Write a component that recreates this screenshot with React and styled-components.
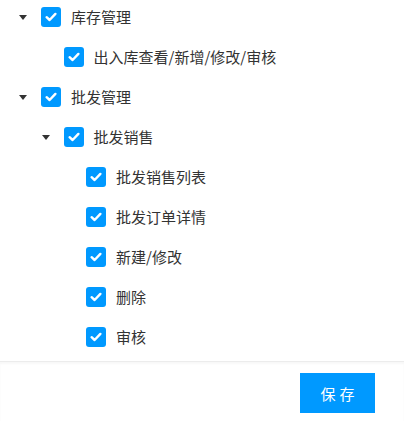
import React, { useState } from "react";
import styled, { createGlobalStyle } from "styled-components";

const Global = createGlobalStyle`
  html, body { margin: 0; padding: 0; background: #fff; }
  body { font-family: "Noto Sans CJK SC", "Noto Sans", sans-serif; }
`;

const Page = styled.div`
  width: 404px;
  height: 421px;
  display: flex;
  flex-direction: column;
  background: #fff;
`;

const Tree = styled.div`
  flex: 1;
  display: flex;
  flex-direction: column;
  gap: 8px;
  padding-top: 1px;
`;

const Row = styled.div`
  height: 32px;
  display: flex;
  align-items: center;
  padding-left: ${(p) => 19 + p.$level * 22.5}px;
`;

const CaretBox = styled.div`
  width: 22px;
  height: 32px;
  display: flex;
  align-items: center;
  cursor: pointer;
`;

const Caret = styled.span`
  width: 0;
  height: 0;
  border-left: 4px solid transparent;
  border-right: 4px solid transparent;
  border-top: 5px solid #333;
  visibility: ${(p) => (p.$hidden ? "hidden" : "visible")};
`;

const Box = styled.span`
  width: 20px;
  height: 20px;
  border-radius: 3px;
  background: #0099ff;
  display: flex;
  align-items: center;
  justify-content: center;
  flex-shrink: 0;
`;

const Label = styled.span`
  margin-left: 10px;
  font-size: 15px;
  color: #333;
  white-space: nowrap;
  line-height: 20px;
`;

const Footer = styled.div`
  height: 60px;
  border-top: 1px solid #ececec;
  box-shadow: inset 0 2px 2px rgba(0, 0, 0, 0.03);
  display: flex;
  justify-content: flex-end;
  align-items: flex-start;
  padding: 11px 29px 0 0;
  box-sizing: border-box;
`;

const SaveButton = styled.button`
  width: 75px;
  height: 40px;
  border: none;
  border-radius: 0;
  background: #0099ff;
  color: #fff;
  font-family: "Noto Sans CJK SC", "Noto Sans", sans-serif;
  font-size: 15px;
  letter-spacing: 4px;
  padding: 0 0 0 4px;
  cursor: pointer;
`;

const Check = () => (
  <svg width="14" height="14" viewBox="0 0 14 14">
    <path d="M2.6 7.2 L5.6 10 L11.4 3.9" fill="none" stroke="#fff" strokeWidth="2.4" strokeLinecap="round" strokeLinejoin="round" />
  </svg>
);

const items = [
  { level: 0, label: "库存管理", parent: true },
  { level: 1, label: "出入库查看/新增/修改/审核" },
  { level: 0, label: "批发管理", parent: true },
  { level: 1, label: "批发销售", parent: true },
  { level: 2, label: "批发销售列表" },
  { level: 2, label: "批发订单详情" },
  { level: 2, label: "新建/修改" },
  { level: 2, label: "删除" },
  { level: 2, label: "审核" },
];

export default function App() {
  return (
    <Page>
      <Global />
      <Tree>
        {items.map((it, i) => (
          <Row key={i} $level={it.level}>
            <CaretBox>
              <Caret $hidden={!it.parent} />
            </CaretBox>
            <Box>
              <Check />
            </Box>
            <Label>{it.label}</Label>
          </Row>
        ))}
      </Tree>
      <Footer>
        <SaveButton>保存</SaveButton>
      </Footer>
    </Page>
  );
}
